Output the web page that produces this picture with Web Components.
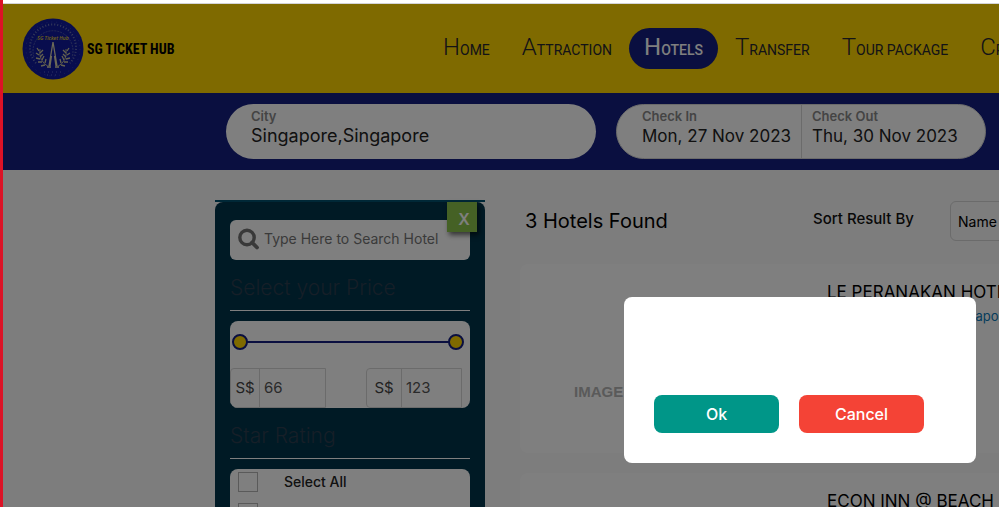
<!DOCTYPE html>
<html lang="en">
<head>
<meta charset="utf-8">
<title>SG Ticket Hub</title>
<style>
  * { box-sizing: border-box; }
  html, body { height: 100%; }
  body {
    margin: 0;
    padding-left: 3px;
    background: #dc1226;
    font-family: Inter, "Open Sans", sans-serif;
    overflow: hidden;
  }
</style>
</head>
<body>
<hotel-page></hotel-page>

<script>
class SiteLogo extends HTMLElement {
  connectedCallback() {
    this.attachShadow({ mode: 'open' });
    this.shadowRoot.innerHTML = `
      <style>
        :host { display: block; flex: none; }
        a {
          display: flex;
          align-items: center;
          gap: 3px;
          color: #000;
          text-decoration: none;
          font: bold 14px "Liberation Sans Narrow", "Roboto Condensed", Roboto, sans-serif;
          white-space: nowrap;
        }
        svg { display: block; }
      </style>
      <a href="#home">
        <svg width="62" height="62" viewBox="0 0 62 62" aria-hidden="true">
          <circle cx="31" cy="31" r="30.5" fill="#101a9c"/>
          <circle cx="31" cy="31" r="27" fill="none" stroke="#3440b8" stroke-dasharray="1 4"/>
          <path d="M14 45A23 23 0 1 1 48 45" fill="none" stroke="#6b73b4" stroke-width="2" stroke-dasharray="1 2"/>
          <path d="M12 39A20 20 0 1 1 50 39" fill="none" stroke="#4c56ac" stroke-dasharray="2 1"/>
          <text x="31" y="22" text-anchor="middle" font-family="Open Sans, sans-serif" font-size="5" font-style="italic" font-weight="600" fill="#e0cc30">SG Ticket Hub</text>
          <path d="M31 24L27 48M31 24L35 48M25 49H29M33 49H37M29.500 38L28 48M32.500 38L34 48" fill="none" stroke="#d8d2b0" stroke-width="1.300"/>
          <path d="M18 31Q16 43 27 49M44 31Q46 43 35 49" fill="none" stroke="#b5b294"/>
          <path d="M17 33l-2-3M17 37l-3-2M18 41l-4-1M20 44l-4 0M23 47l-4 1M18 35l3-3M18 39l3-3M20 42l2-4M23 45l1-4M45 33l2-3M45 37l3-2M44 41l4-1M42 44l4 0M39 47l4 1M44 35l-3-3M44 39l-3-3M42 42l-2-4M39 45l-1-4" stroke="#c8c4a0" stroke-width="1.300"/>
          <path d="M22 54H40M25 57H37" stroke="#5c68cc" stroke-dasharray="1 3"/>
        </svg>
        <span>SG TICKET HUB</span>
      </a>
    `;
  }
}

class NavLink extends HTMLElement {
  connectedCallback() {
    this.attachShadow({ mode: 'open' });
    this.shadowRoot.innerHTML = `
      <style>
        :host { display: block; flex: none; }
        a {
          display: block;
          height: 41px;
          padding: 0 15px;
          border-radius: 21px;
          color: #26262e;
          font-family: Roboto, sans-serif;
          font-size: 14px;
          line-height: 38px;
          text-transform: uppercase;
          text-decoration: none;
          white-space: nowrap;
        }
        a::first-letter { font-size: 24px; font-weight: 300; }
        :host([active]) a { background: #141f80; color: #fff; font-weight: 500; }
        :host([active]) a::first-letter { font-weight: 400; }
      </style>
      <a href="#"><slot></slot></a>
    `;
  }
}

class SiteHeader extends HTMLElement {
  connectedCallback() {
    this.attachShadow({ mode: 'open' });
    this.shadowRoot.innerHTML = `
      <style>
        :host { display: block; background: #ffd400; }
        header {
          display: flex;
          align-items: center;
          height: 89px;
          padding-left: 19px;
        }
        site-logo { flex: 0 0 406px; }
        nav { display: flex; gap: 2px; }
      </style>
      <header>
        <site-logo></site-logo>
        <nav>
          <nav-link>Home</nav-link>
          <nav-link>Attraction</nav-link>
          <nav-link active>Hotels</nav-link>
          <nav-link>Transfer</nav-link>
          <nav-link>Tour package</nav-link>
          <nav-link>Cruise</nav-link>
        </nav>
      </header>
    `;
  }
}

class SearchField extends HTMLElement {
  connectedCallback() {
    const label = this.getAttribute('label');
    const value = this.getAttribute('value');
    this.attachShadow({ mode: 'open' });
    this.shadowRoot.innerHTML = `
      <style>
        :host { display: block; flex: 1; min-width: 0; font-size: 18px; }
        label { display: block; color: #898989; font-size: 13px; font-weight: 600; line-height: 16px; }
        input {
          display: block;
          width: 100%;
          padding: 0;
          border: 0;
          background: none;
          color: #222;
          font: inherit;
          line-height: 24px;
          outline: none;
        }
      </style>
      <label for="field">${label}</label>
      <input id="field" type="text" value="${value}">
    `;
  }
}

class SearchBar extends HTMLElement {
  connectedCallback() {
    this.attachShadow({ mode: 'open' });
    this.shadowRoot.innerHTML = `
      <style>
        :host { display: block; background: #141f80; }
        form { display: flex; gap: 20px; padding: 11px 0 11px 223px; }
        .pill {
          box-sizing: border-box;
          display: flex;
          flex: 0 0 370px;
          height: 55px;
          padding: 4px 25px;
          border-radius: 28px;
          background: #fff;
        }
        .dates { padding: 0 0 0 25px; border: 1px solid #d6d6d6; }
        .dates search-field { padding-top: 3px; font-size: 17px; }
        .dates search-field + search-field { padding-left: 10px; border-left: 1px solid #d6d6d6; }
        .dates search-field:first-child { flex: 0 0 159px; }
      </style>
      <form>
        <div class="pill"><search-field label="City" value="Singapore,Singapore"></search-field></div>
        <div class="pill dates">
          <search-field label="Check In" value="Mon, 27 Nov 2023"></search-field>
          <search-field label="Check Out" value="Thu, 30 Nov 2023"></search-field>
        </div>
      </form>
    `;
  }
}

class FilterSection extends HTMLElement {
  connectedCallback() {
    this.attachShadow({ mode: 'open' });
    this.shadowRoot.innerHTML = `
      <style>
        :host { display: block; }
        h2 {
          margin: 0 0 10px;
          padding: 13px 0 7px;
          border-bottom: 1px solid #fff;
          color: #2c3e50;
          font-size: 21px;
          font-weight: 300;
          line-height: 30px;
        }
        .panel { border-radius: 8px; background: #fff; overflow: hidden; }
      </style>
      <h2>${this.getAttribute('heading')}</h2>
      <div class="panel"><slot></slot></div>
    `;
  }
}

class PriceRange extends HTMLElement {
  connectedCallback() {
    this.attachShadow({ mode: 'open' });
    this.shadowRoot.innerHTML = `
      <style>
        * { box-sizing: border-box; }
        :host { display: block; }
        .slider { display: grid; align-items: center; height: 47px; padding: 0 6px 5px 2px; }
        .slider input {
          grid-area: 1 / 1;
          appearance: none;
          width: 100%;
          height: 16px;
          margin: 0;
          background: linear-gradient(#141f80, #141f80) center / calc(100% - 16px) 2px no-repeat;
          pointer-events: none;
        }
        .slider input + input { background: none; }
        .slider input::-webkit-slider-thumb {
          appearance: none;
          width: 16px;
          height: 16px;
          border: 2px solid #141f80;
          border-radius: 50%;
          background: #ffd400;
          pointer-events: auto;
        }
        .amounts { display: flex; justify-content: space-between; padding-right: 8px; }
        label {
          display: flex;
          width: 96px;
          height: 40px;
          border: 1px solid #d6d6d6;
          border-radius: 4px 0 0 4px;
          color: #444;
          font-size: 15px;
          line-height: 38px;
        }
        label span { width: 29px; border-right: 1px solid #d6d6d6; text-align: center; }
        label + label span { width: 35px; }
        label input {
          flex: 1;
          min-width: 0;
          padding: 0 4px;
          border: 0;
          background: none;
          color: #555;
          font: inherit;
          outline: none;
        }
      </style>
      <div class="slider">
        <input type="range" min="66" max="123" value="66" aria-label="Lowest price">
        <input type="range" min="66" max="123" value="123" aria-label="Highest price">
      </div>
      <div class="amounts">
        <label><span>S$</span><input type="text" value="66"></label>
        <label><span>S$</span><input type="text" value="123"></label>
      </div>
    `;
  }
}

class StarOptions extends HTMLElement {
  connectedCallback() {
    this.attachShadow({ mode: 'open' });
    this.shadowRoot.innerHTML = `
      <style>
        :host { display: grid; gap: 11px; padding: 3px 8px 12px; }
        label { display: flex; align-items: center; gap: 26px; color: #222; font-size: 14px; font-weight: 500; line-height: 20px; }
        input { appearance: none; flex: none; box-sizing: border-box; width: 20px; height: 20px; margin: 0; border: 1px solid #b4b4b4; }
        input:checked { background: #141f80; }
      </style>
      <label><input type="checkbox">Select All</label>
      <label><input type="checkbox" aria-label="Five stars"></label>
    `;
  }
}

class FilterPanel extends HTMLElement {
  connectedCallback() {
    this.attachShadow({ mode: 'open' });
    this.shadowRoot.innerHTML = `
      <style>
        * { box-sizing: border-box; }
        :host { display: block; position: relative; flex: 0 0 270px; min-width: 0; border-top: 2px solid #00506e; }
        aside { padding: 18px 15px; border-radius: 8px 8px 0 0; background: #00344a; }
        .search { display: flex; align-items: center; gap: 5px; height: 40px; padding: 0 8px 2px; border-radius: 6px; background: #fff; }
        .search svg { flex: none; }
        .search input {
          flex: 1;
          min-width: 0;
          padding: 0;
          border: 0;
          background: none;
          font: 14px/20px Inter, "Open Sans", sans-serif;
          outline: none;
        }
        .search input::placeholder { color: #757575; opacity: 1; }
        .close {
          position: absolute;
          top: 0;
          right: 8px;
          width: 30px;
          height: 30px;
          padding: 4px 0 0 4px;
          border: 0;
          background: #8bc34a;
          box-shadow: 2px 3px 5px rgba(0,0,0,0.6);
          color: #fff;
          font: 600 16px/20px Inter, sans-serif;
        }
      </style>
      <aside>
        <div class="search">
          <svg width="21" height="22" viewBox="0 0 21 22" fill="none" stroke="#727272" aria-hidden="true">
            <circle cx="9" cy="9.500" r="7.200" stroke-width="3.400"/>
            <path d="M14 14.500L19 19.500" stroke-width="3.800" stroke-linecap="round"/>
          </svg>
          <input type="search" placeholder="Type Here to Search Hotel" aria-label="Search hotel">
        </div>
        <filter-section heading="Select your Price"><price-range></price-range></filter-section>
        <filter-section heading="Star Rating"><star-options></star-options></filter-section>
      </aside>
      <button class="close" aria-label="Close filters">X</button>
    `;
  }
}

class HotelCard extends HTMLElement {
  connectedCallback() {
    this.attachShadow({ mode: 'open' });
    this.shadowRoot.innerHTML = `
      <style>
        :host { display: flex; height: 189px; border-radius: 8px; background: #fff; }
        .photo {
          display: flex;
          flex: 0 0 250px;
          align-items: center;
          padding: 66px 0 0 54px;
          box-sizing: border-box;
          height: 189px;
          color: #b4b4b4;
          font: bold 15px/20px "Liberation Sans", sans-serif;
        }
        .info { padding: 16px 0 0 57px; white-space: nowrap; }
        h3 { margin: 0; color: #000; font-size: 17px; font-weight: 400; line-height: 24px; }
        a { color: #0c7ab8; font-size: 13px; line-height: 24px; text-decoration: none; }
      </style>
      <div class="photo"><slot name="photo"></slot></div>
      <div class="info">
        <h3><slot name="name"></slot></h3>
        <a href="#map"><slot name="place"></slot></a>
      </div>
    `;
  }
}

class HotelResults extends HTMLElement {
  connectedCallback() {
    this.attachShadow({ mode: 'open' });
    this.shadowRoot.innerHTML = `
      <style>
        * { box-sizing: border-box; }
        :host { display: block; flex: 0 0 600px; }
        .top { display: flex; height: 40px; margin: 1px 0 23px 5px; }
        h1 { flex: 0 0 288px; margin: 0; color: #000; font-size: 20px; font-weight: 400; line-height: 40px; }
        label { flex: 0 0 137px; color: #111; font-size: 15px; font-weight: 500; line-height: 36px; }
        select {
          flex: 1;
          appearance: none;
          padding: 0 7px;
          border: 1px solid #d6d6d6;
          border-radius: 6px;
          background: #fafafa;
          color: #000;
          font: 14px Inter, "Open Sans", sans-serif;
        }
        .list { display: grid; gap: 20px; }
      </style>
      <div class="top">
        <h1>3 Hotels Found</h1>
        <label for="sort">Sort Result By</label>
        <select id="sort"><option>Name</option><option>Price</option></select>
      </div>
      <div class="list">
        <hotel-card>
          <span slot="photo">IMAGE</span>
          <span slot="name">LE PERANAKAN HOTEL</span>
          <span slot="place">400 East Coast Rd, Singapore</span>
        </hotel-card>
        <hotel-card><span slot="name">ECON INN @ BEACH</span></hotel-card>
      </div>
    `;
  }
}

class ConfirmDialog extends HTMLElement {
  connectedCallback() {
    this.attachShadow({ mode: 'open' });
    this.shadowRoot.innerHTML = `
      <style>
        * { box-sizing: border-box; }
        :host { position: absolute; inset: 0; background: rgba(0,0,0,0.5); }
        [role="dialog"] {
          position: absolute;
          top: 293px;
          right: 23px;
          display: flex;
          gap: 20px;
          width: 352px;
          padding: 98px 30px 30px;
          border-radius: 8px;
          background: #fff;
        }
        button {
          width: 125px;
          height: 38px;
          padding: 0;
          border: 0;
          border-radius: 8px;
          background: #009688;
          color: #fff;
          font: 500 16px/20px Inter, "Open Sans", sans-serif;
        }
        .cancel { background: #f44336; }
      </style>
      <div role="dialog" aria-modal="true" aria-label="Confirm">
        <button>Ok</button>
        <button class="cancel">Cancel</button>
      </div>
    `;
    this.shadowRoot.querySelectorAll('button').forEach(button => {
      button.addEventListener('click', () => this.remove());
    });
  }
}

class HotelPage extends HTMLElement {
  connectedCallback() {
    this.attachShadow({ mode: 'open' });
    this.shadowRoot.innerHTML = `
      <style>
        :host { display: flex; flex-direction: column; height: 100%; background: #fff; }
        .edge { flex: none; height: 4px; box-sizing: border-box; border-bottom: 1px solid #d4d4d8; }
        .view { flex: 1; min-height: 0; position: relative; overflow: hidden; background: #fafafa; }
        main { display: flex; align-items: flex-start; gap: 35px; padding: 30px 0 0 212px; }
      </style>
      <div class="edge"></div>
      <div class="view">
        <site-header></site-header>
        <search-bar></search-bar>
        <main>
          <filter-panel></filter-panel>
          <hotel-results></hotel-results>
        </main>
        <confirm-dialog></confirm-dialog>
      </div>
    `;
  }
}

customElements.define('site-logo', SiteLogo);
customElements.define('nav-link', NavLink);
customElements.define('site-header', SiteHeader);
customElements.define('search-field', SearchField);
customElements.define('search-bar', SearchBar);
customElements.define('filter-section', FilterSection);
customElements.define('price-range', PriceRange);
customElements.define('star-options', StarOptions);
customElements.define('filter-panel', FilterPanel);
customElements.define('hotel-card', HotelCard);
customElements.define('hotel-results', HotelResults);
customElements.define('confirm-dialog', ConfirmDialog);
customElements.define('hotel-page', HotelPage);
</script>
</body>
</html>
